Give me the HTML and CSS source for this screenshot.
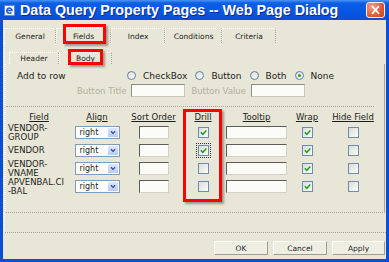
FILE: index.html
```html
<!doctype html>
<html>
<head>
  <title>Data Query Property Pages -- Web Page Dialog</title>
  <link rel="stylesheet" href="styles.css">
</head>
<body>

<div id="dialog">
  <!-- title bar -->
  <div class="titlebar">
    <svg class="app-icon" viewBox="0 0 11 11">
      <rect x="0.5" y="0.5" width="10" height="10" fill="#f4f6fb" stroke="#6d86b8"/>
      <path d="M3 5.5 H8 A2.6 2.6 0 1 0 7.4 7.4" fill="none" stroke="#1f5fd0" stroke-width="1.5"/>
    </svg>
    <span class="title">Data Query Property Pages -- Web Page Dialog</span>
    <div class="close-btn">
      <svg viewBox="0 0 19 16"><path d="M5.5 3.5 L13.5 12.5 M13.5 3.5 L5.5 12.5" stroke="#fff" stroke-width="2"/></svg>
    </div>
  </div>

  <div class="frame">
    <div class="tabs">
      <div class="tab w-general">General</div>
      <div class="tab w-fields active">Fields</div>
      <div class="tab w-index">Index</div>
      <div class="tab w-conditions">Conditions</div>
      <div class="tab w-criteria">Criteria</div>
    </div>

    <div class="tab-panel">
      <div class="subtabs">
        <div class="tab w-header">Header</div>
        <div class="tab w-body active">Body</div>
      </div>

      <div class="sub-panel">
        <div class="add-row">
          <span class="add-label">Add to row</span>
          <span class="option"><span class="radio"></span>CheckBox</span>
          <span class="option"><span class="radio"></span>Button</span>
          <span class="option"><span class="radio"></span>Both</span>
          <span class="option"><span class="radio on"></span>None</span>
        </div>

        <div class="button-row">
          <span class="muted">Button Title</span>
          <span class="textbox btn-input"></span>
          <span class="muted">Button Value</span>
          <span class="textbox btn-input"></span>
        </div>

        <div class="field-grid">
          <div class="hd">Field</div>
          <div class="hd">Align</div>
          <div class="hd">Sort Order</div>
          <div class="hd">Drill</div>
          <div class="hd">Tooltip</div>
          <div class="hd">Wrap</div>
          <div class="hd">Hide Field</div>

          <div class="fname">VENDOR-<br>GROUP</div>
          <div class="select"><span class="sel-text">right</span><span class="sel-arrow"><svg viewBox="0 0 11 11"><path d="M3 4 L5.5 6.5 L8 4" fill="none" stroke="#2a4a9a" stroke-width="1.5"/></svg></span></div>
          <div class="textbox sort"></div>
          <div class="cb"><svg viewBox="0 0 9 9"><path d="M1.8 4.3 L3.8 6.3 L7.3 2.5" fill="none" stroke="#21a121" stroke-width="1.5"/></svg></div>
          <div class="textbox tooltip"></div>
          <div class="cb"><svg viewBox="0 0 9 9"><path d="M1.8 4.3 L3.8 6.3 L7.3 2.5" fill="none" stroke="#21a121" stroke-width="1.5"/></svg></div>
          <div class="cb"></div>

          <div class="fname">VENDOR</div>
          <div class="select"><span class="sel-text">right</span><span class="sel-arrow"><svg viewBox="0 0 11 11"><path d="M3 4 L5.5 6.5 L8 4" fill="none" stroke="#2a4a9a" stroke-width="1.5"/></svg></span></div>
          <div class="textbox sort"></div>
          <div class="cb focus"><svg viewBox="0 0 9 9"><path d="M1.8 4.3 L3.8 6.3 L7.3 2.5" fill="none" stroke="#21a121" stroke-width="1.5"/></svg></div>
          <div class="textbox tooltip"></div>
          <div class="cb"><svg viewBox="0 0 9 9"><path d="M1.8 4.3 L3.8 6.3 L7.3 2.5" fill="none" stroke="#21a121" stroke-width="1.5"/></svg></div>
          <div class="cb"></div>

          <div class="fname">VENDOR-<br>VNAME</div>
          <div class="select"><span class="sel-text">right</span><span class="sel-arrow"><svg viewBox="0 0 11 11"><path d="M3 4 L5.5 6.5 L8 4" fill="none" stroke="#2a4a9a" stroke-width="1.5"/></svg></span></div>
          <div class="textbox sort"></div>
          <div class="cb"></div>
          <div class="textbox tooltip"></div>
          <div class="cb"><svg viewBox="0 0 9 9"><path d="M1.8 4.3 L3.8 6.3 L7.3 2.5" fill="none" stroke="#21a121" stroke-width="1.5"/></svg></div>
          <div class="cb"></div>

          <div class="fname">APVENBAL.CI<br>-BAL</div>
          <div class="select"><span class="sel-text">right</span><span class="sel-arrow"><svg viewBox="0 0 11 11"><path d="M3 4 L5.5 6.5 L8 4" fill="none" stroke="#2a4a9a" stroke-width="1.5"/></svg></span></div>
          <div class="textbox sort"></div>
          <div class="cb"></div>
          <div class="textbox tooltip"></div>
          <div class="cb"><svg viewBox="0 0 9 9"><path d="M1.8 4.3 L3.8 6.3 L7.3 2.5" fill="none" stroke="#21a121" stroke-width="1.5"/></svg></div>
          <div class="cb"></div>
        </div>
      </div>
    </div>

    <div class="dialog-buttons">
      <div class="btn">OK</div>
      <div class="btn">Cancel</div>
      <div class="btn apply">Apply</div>
    </div>
  </div>

  <!-- red callout boxes -->
  <div class="callout hl-fields"></div>
  <div class="callout hl-body"></div>
  <div class="callout hl-drill"></div>
</div>

</body>
</html>
```

FILE: styles.css
```css
body {
  margin: 0;
  font-family: "DejaVu Sans", sans-serif;
  font-size: 8.5px;
  color: #1e1e1e;
}

#dialog {
  width: 389px;
  height: 262px;
  position: relative;
  background: #e8e6d6;
  overflow: hidden;
}

/* title bar */
.titlebar {
  height: 20px;
  display: flex;
  align-items: center;
  padding-left: 4px;
  background: linear-gradient(to bottom, #4b95f7 0, #0d5fe6 3px, #0657e2 55%, #0a4fd6 100%);
}

.app-icon {
  width: 11px;
  height: 11px;
  margin-right: 5px;
  flex: none;
}

.title {
  font-family: "Liberation Sans", sans-serif;
  font-weight: bold;
  font-size: 14.3px;
  color: #fff;
  white-space: nowrap;
  text-shadow: 1px 1px 0 #0a2a96;
}

.close-btn {
  margin-left: auto;
  margin-right: 4px;
  width: 19px;
  height: 16px;
  box-sizing: border-box;
  border: 1px solid #f2f2f2;
  border-radius: 3px;
  background: radial-gradient(circle at 30% 25%, #f3a085 0, #e35f36 55%, #c8421e 100%);
}

.close-btn svg {
  display: block;
  width: 17px;
  height: 14px;
}

/* window body */
.frame {
  height: 242px;
  box-sizing: border-box;
  border: 3px solid #0b4fd6;
  border-top: 0;
  display: flex;
  flex-direction: column;
}

.tabs {
  display: flex;
  margin-top: 8px;
  height: 15px;
  padding-left: 1px;
}

.tab {
  box-sizing: border-box;
  display: flex;
  align-items: center;
  justify-content: center;
  font-size: 7.5px;
  border-top: 1px dotted #fff;
  border-left: 1px dotted #fff;
  border-right: 1px dotted #a9a89b;
}

.w-general { width: 52px; }
.w-fields { width: 55px; }
.w-index { width: 54px; }
.w-conditions { width: 57px; }
.w-criteria { width: 54px; }
.w-header { width: 50px; }
.w-body { width: 53px; }

.tab-panel {
  height: 190px;
  box-sizing: border-box;
  margin-left: 1px;
  border-left: 1px dotted #fff;
  border-bottom: 1px dotted #a5a497;
  display: flex;
  flex-direction: column;
}

.subtabs {
  display: flex;
  margin-top: 9px;
  height: 12px;
  padding-left: 4px;
}

.sub-panel {
  height: 149px;
  box-sizing: border-box;
  margin-right: 1px;
  border-left: 1px dotted #fff;
  border-right: 1px solid #a8a79a;
  border-bottom: 1px dotted #a5a497;
}

/* add to row options */
.add-row {
  display: flex;
  align-items: center;
  height: 11px;
  margin-top: 6px;
  padding-left: 11px;
  font-size: 9px;
}

.add-label {
  width: 110px;
}

.option {
  display: flex;
  align-items: center;
  gap: 7px;
  margin-right: 8px;
}

.radio {
  width: 9px;
  height: 9px;
  box-sizing: border-box;
  border: 1px solid #5f7fae;
  border-radius: 50%;
  background: linear-gradient(135deg, #dcdcd4, #fdfdfb);
  position: relative;
}

.radio.on::after {
  content: "";
  position: absolute;
  left: 2px;
  top: 2px;
  width: 3px;
  height: 3px;
  border-radius: 50%;
  background: #2aa52a;
}

.button-row {
  display: flex;
  align-items: center;
  height: 13px;
  margin-top: 3px;
  padding-left: 71px;
}

.muted {
  color: #b3b0a2;
}

.textbox {
  height: 13px;
  box-sizing: border-box;
  background: #fbfbf8;
  border: 1px solid;
  border-color: #5c5c5c #d2d1c6 #d2d1c6 #5c5c5c;
}

.btn-input {
  width: 54px;
  margin: 0 6px 0 5px;
  border-color: #8e8d84 #c7c6bb #c7c6bb #8e8d84;
}

/* fields table */
.field-grid {
  margin-top: 9px;
  margin-right: 10px;
  padding: 3px 0 0 2px;
  border-top: 1px dotted #a5a497;
  display: grid;
  grid-template-columns: 62px 54px 59px 40px 67px 34px 58px;
  grid-template-rows: 14px 17px 19px 17px 19px;
  align-items: center;
  justify-items: center;
}

.hd {
  text-decoration: underline;
}

.fname {
  justify-self: start;
  line-height: 9px;
}

.select {
  width: 45px;
  height: 13px;
  box-sizing: border-box;
  border: 1px solid #7f9db9;
  background: #fff;
  display: flex;
}

.sel-text {
  flex: 1;
  padding-left: 4px;
  font-size: 8px;
  line-height: 11px;
}

.sel-arrow {
  width: 12px;
  margin: 0;
  box-sizing: border-box;
  border: 1px solid #fff;
  background: linear-gradient(to bottom, #dde7fc, #b8cbf5);
}

.sel-arrow svg {
  display: block;
  width: 10px;
  height: 9px;
}

.sort { width: 30px; }
.tooltip { width: 61px; }

.cb {
  width: 11px;
  height: 11px;
  box-sizing: border-box;
  border: 1px solid #6a8cb7;
  background: linear-gradient(135deg, #dcdcd4, #fdfdfb);
}

.cb svg {
  display: block;
  width: 9px;
  height: 9px;
}

.cb.focus {
  outline: 1px dotted #333;
  outline-offset: 1px;
}

/* OK / Cancel / Apply */
.dialog-buttons {
  display: flex;
  justify-content: flex-end;
  gap: 5px;
  margin-top: 8px;
  padding-right: 1px;
}

.btn {
  width: 54px;
  height: 14px;
  box-sizing: border-box;
  display: flex;
  align-items: center;
  justify-content: center;
  font-size: 7.5px;
  background: #efeee3;
  border: 1px solid;
  border-color: #fdfdfa #9f9e92 #9f9e92 #fdfdfa;
}

.btn.apply { width: 53px; }

/* red highlight boxes drawn over the screenshot */
.callout {
  position: absolute;
  box-sizing: border-box;
  border: 3px solid #f00;
  box-shadow: 2px 2px 2px rgba(60, 60, 50, 0.45);
}

.hl-fields { left: 63px; top: 24px; width: 43px; height: 20px; }
.hl-body { left: 68px; top: 49px; width: 35px; height: 16px; }
.hl-drill { left: 183px; top: 109px; width: 39px; height: 93px; }
```
